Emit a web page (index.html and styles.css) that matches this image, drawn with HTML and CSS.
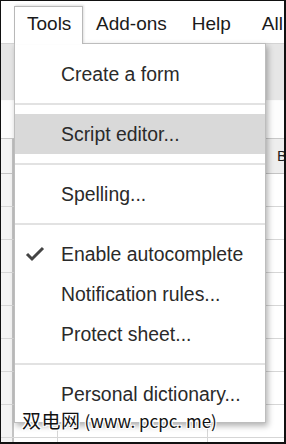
FILE: index.html
```html
<!DOCTYPE html>
<html lang="en">
<head>
    <meta charset="UTF-8">
    <title>Tools menu</title>
    <link rel="stylesheet" href="styles.css">
</head>
<body>
    <div class="screen">
        <div class="menubar">
            <div class="tab">Tools</div>
            <div class="top-item addons">Add-ons</div>
            <div class="top-item help">Help</div>
            <div class="top-item all">All</div>
        </div>
        <div class="toolbar"></div>
        <div class="formula"></div>
        <div class="sheet">
            <div class="row head"><div class="rh"></div><div class="c a"></div><div class="c b"></div><div class="c last">B</div></div>
            <div class="row"><div class="rh"></div><div class="c a"></div><div class="c b"></div><div class="c last"></div></div>
            <div class="row"><div class="rh"></div><div class="c a"></div><div class="c b"></div><div class="c last"></div></div>
            <div class="row"><div class="rh"></div><div class="c a"></div><div class="c b"></div><div class="c last"></div></div>
            <div class="row"><div class="rh"></div><div class="c a"></div><div class="c b"></div><div class="c last"></div></div>
            <div class="row"><div class="rh"></div><div class="c a"></div><div class="c b"></div><div class="c last"></div></div>
            <div class="row"><div class="rh"></div><div class="c a"></div><div class="c b"></div><div class="c last"></div></div>
            <div class="row"><div class="rh"></div><div class="c a"></div><div class="c b"></div><div class="c last"></div></div>
            <div class="row"><div class="rh"></div><div class="c a"></div><div class="c b"></div><div class="c last"></div></div>
            <div class="row"><div class="rh"></div><div class="c a"></div><div class="c b"></div><div class="c last"></div></div>
        </div>

        <div class="menu">
            <div class="item">Create a form</div>
            <div class="sep"></div>
            <div class="item hover">Script editor...</div>
            <div class="sep"></div>
            <div class="item">Spelling...</div>
            <div class="sep"></div>
            <div class="item">
                <svg class="check" width="20" height="16" viewBox="0 0 20 16">
                    <path d="M2 8 L7 13 L18 2" fill="none" stroke="#444" stroke-width="3"/>
                </svg>
                Enable autocomplete
            </div>
            <div class="item">Notification rules...</div>
            <div class="item">Protect sheet...</div>
            <div class="sep"></div>
            <div class="item">Personal dictionary...</div>
        </div>

        <div class="watermark">双电网<span class="url">(www. pcpc. me)</span></div>
    </div>
</body>
</html>
```
FILE: styles.css
```css
body{
    margin: 0;
    overflow: hidden;
    font-family: "Liberation Sans", Arial, sans-serif;
}

.screen{
    position: relative;
    width: 286px;
    height: 444px;
    box-sizing: border-box;
    border: 1px solid #111;
    border-right-width: 2px;
    border-bottom-width: 2px;
    background: #fff;
    overflow: hidden;
}

.menubar{
    height: 42px;
    display: flex;
    align-items: flex-end;
    padding-left: 13px;
    font-size: 19px;
    color: #1a1a1a;
    white-space: nowrap;
}

.menubar > div{
    flex-shrink: 0;
}

.tab{
    position: relative;
    z-index: 3;
    width: 55px;
    height: 37px;
    margin-bottom: -1px;
    padding-left: 12px;
    line-height: 34px;
    border: 1px solid #b8b8b8;
    border-bottom: none;
    background: #fff;
    box-shadow: 1px -1px 2px rgba(0,0,0,0.12);
}

.top-item{
    line-height: 34px;
    height: 36px;
}

.addons{ margin-left: 13px; }
.help{ margin-left: 25px; }
.all{ margin-left: 31px; }

.toolbar{
    height: 56px;
    background: #e6e6e6;
    border-top: 1px solid #d4d4d4;
    border-bottom: 1px solid #fafafa;
}

.formula{
    height: 37px;
    background: #fdfdfd;
    border-bottom: 1px solid #c8c8c8;
}

.row{
    display: flex;
    height: 32px;
    border-bottom: 1px solid #d6d6d6;
}

.row.head{
    height: 34px;
    background: #eeeeee;
    border-bottom: 1px solid #c4c4c4;
}

.rh{
    width: 11px;
    border-right: 2px solid #c4c4c4;
    background: #f4f4f4;
}

.c{
    border-right: 1px solid #d6d6d6;
}

.a{ width: 43px; }
.b{ width: 149px; }
.last{
    flex: 1;
    border-right: none;
    text-align: right;
    margin-right: -3px;
    font-size: 15px;
    line-height: 34px;
    color: #222;
}

.menu{
    position: absolute;
    z-index: 2;
    left: 13px;
    top: 42px;
    width: 250px;
    padding: 10px 0 8px;
    background: #fff;
    border: 1px solid #bdbdbd;
    box-shadow: 2px 3px 6px rgba(0,0,0,0.3);
    font-size: 19.4px;
    color: #2a2a2a;
}

.item{
    position: relative;
    height: 40px;
    line-height: 40px;
    padding-left: 46px;
    white-space: nowrap;
}

.item.hover{
    background: #d9d9d9;
}

.check{
    position: absolute;
    left: 10px;
    top: 12px;
}

.sep{
    height: 2px;
    margin: 9px 0;
    background: #e2e2e2;
}

.watermark{
    position: absolute;
    z-index: 4;
    left: 21px;
    top: 408px;
    font-family: "Noto Sans CJK SC", sans-serif;
    font-size: 19px;
    line-height: 22px;
    letter-spacing: 0.5px;
    color: #111;
    text-shadow: 1px 1px 0 #fff, -1px -1px 0 #fff, 1px -1px 0 #fff, -1px 1px 0 #fff;
}

.url{
    margin-left: 4px;
    font-size: 17px;
    letter-spacing: 0;
}
```
